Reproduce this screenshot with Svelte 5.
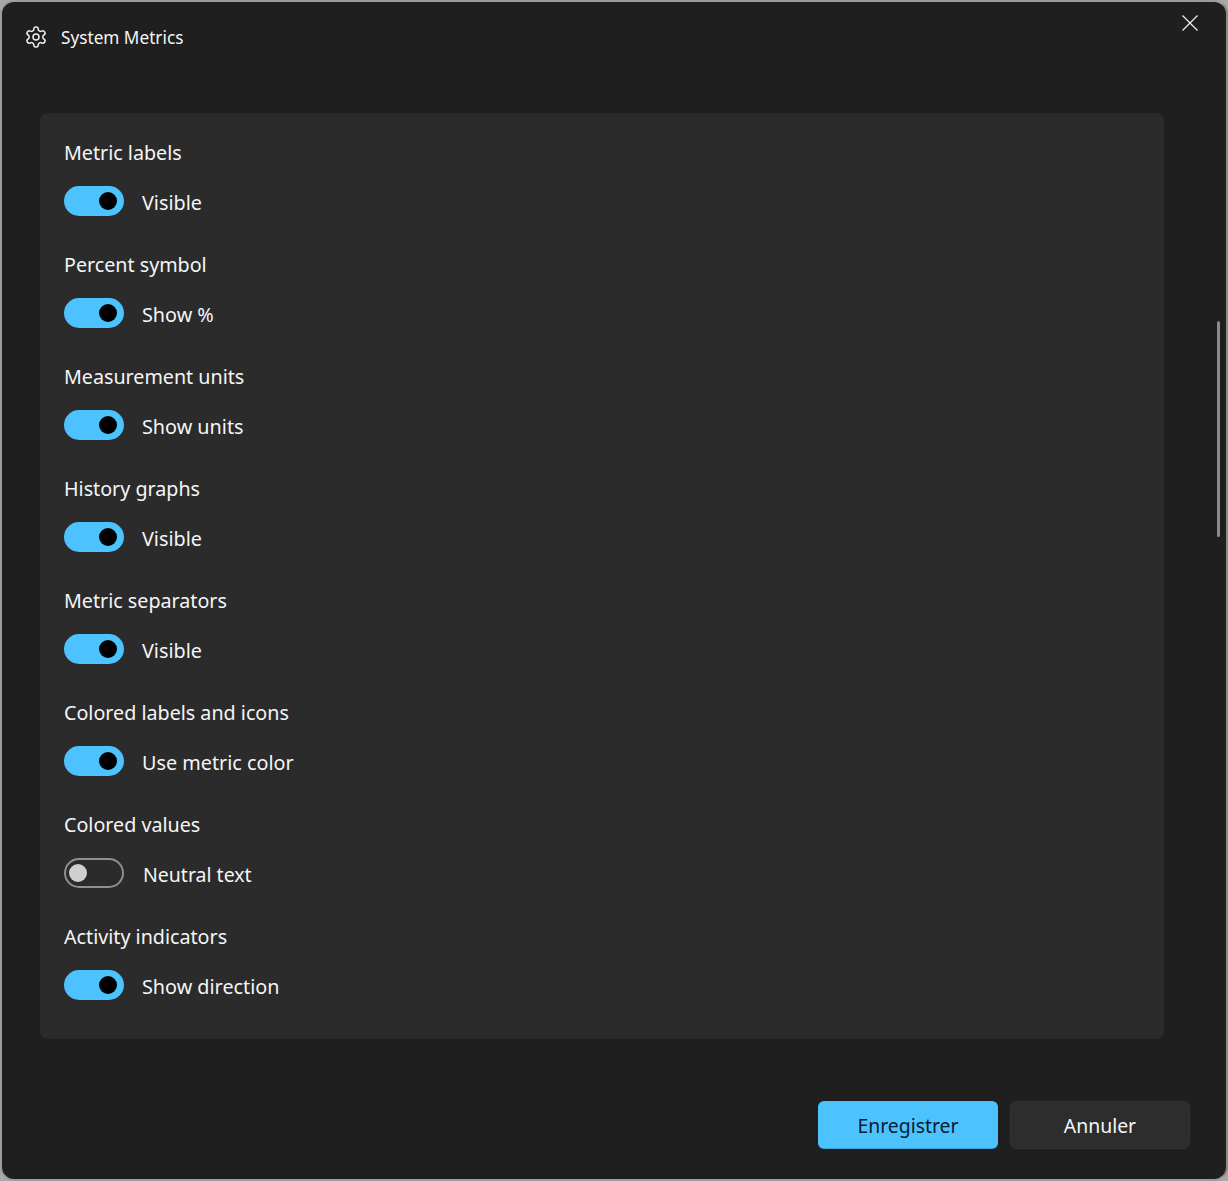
<script>
  const rows = [
    { title: 'Metric labels', text: 'Visible', on: true },
    { title: 'Percent symbol', text: 'Show %', on: true },
    { title: 'Measurement units', text: 'Show units', on: true },
    { title: 'History graphs', text: 'Visible', on: true },
    { title: 'Metric separators', text: 'Visible', on: true },
    { title: 'Colored labels and icons', text: 'Use metric color', on: true },
    { title: 'Colored values', text: 'Neutral text', on: false },
    { title: 'Activity indicators', text: 'Show direction', on: true }
  ];
</script>

<div class="window">
  <header class="titlebar">
    <div class="heading">
      <svg class="gear" viewBox="0 0 24 24" width="24" height="24" fill="none" stroke="#f0f0f0" stroke-width="1.5" stroke-linejoin="round">
        <path d="M12.22 2h-.44a2 2 0 0 0-2 2v.18a2 2 0 0 1-1 1.73l-.43.25a2 2 0 0 1-2 0l-.15-.08a2 2 0 0 0-2.73.73l-.22.38a2 2 0 0 0 .73 2.73l.15.1a2 2 0 0 1 1 1.72v.51a2 2 0 0 1-1 1.74l-.15.09a2 2 0 0 0-.73 2.73l.22.38a2 2 0 0 0 2.73.73l.15-.08a2 2 0 0 1 2 0l.43.25a2 2 0 0 1 1 1.73V20a2 2 0 0 0 2 2h.44a2 2 0 0 0 2-2v-.18a2 2 0 0 1 1-1.73l.43-.25a2 2 0 0 1 2 0l.15.08a2 2 0 0 0 2.73-.73l.22-.39a2 2 0 0 0-.73-2.73l-.15-.08a2 2 0 0 1-1-1.74v-.5a2 2 0 0 1 1-1.74l.15-.09a2 2 0 0 0 .73-2.73l-.22-.38a2 2 0 0 0-2.73-.73l-.15.08a2 2 0 0 1-2 0l-.43-.25a2 2 0 0 1-1-1.73V4a2 2 0 0 0-2-2z" />
        <circle cx="12" cy="12" r="3" />
      </svg>
      <span class="title">System Metrics</span>
    </div>
    <button class="close" aria-label="Close">
      <svg viewBox="0 0 16 16" width="16" height="16" stroke="#f2f2f2" stroke-width="1.2" fill="none">
        <path d="M.5.5l15 15M15.5.5l-15 15" />
      </svg>
    </button>
  </header>

  <div class="scrollarea">
    <section class="card">
      {#each rows as r}
        <div class="row">
          <div class="label">{r.title}</div>
          <div class="control">
            <span class="switch" class:on={r.on}><span class="knob"></span></span>
            <span class="state" class:off={!r.on}>{r.text}</span>
          </div>
        </div>
      {/each}
    </section>
    <div class="scrollbar"></div>
  </div>

  <footer class="footer">
    <button class="btn primary">Enregistrer</button>
    <button class="btn secondary">Annuler</button>
  </footer>
</div>

<style>
  :global(body) {
    margin: 0;
    background: #a8a8a8;
  }
  .window {
    box-sizing: border-box;
    width: 1228px;
    height: 1181px;
    background: #1f1f1f;
    border: 2px solid #9c9c9c;
    border-right-color: #8a8a8a;
    border-radius: 14px;
    font-family: "Noto Sans", "Open Sans", sans-serif;
    color: #f5f5f5;
    display: flex;
    flex-direction: column;
    overflow: hidden;
  }
  .titlebar {
    height: 111px;
    flex: none;
    display: flex;
    justify-content: space-between;
    align-items: flex-start;
    padding: 0 28px 0 22px;
  }
  .heading {
    display: flex;
    align-items: center;
    gap: 13px;
    height: 70px;
  }
  .gear {
    display: block;
  }
  .title {
    font-size: 17.2px;
  }
  .close {
    background: none;
    border: 0;
    padding: 0;
    margin-top: 13px;
    height: 16px;
    width: 16px;
    line-height: 0;
  }
  .scrollarea {
    position: relative;
    flex: none;
    height: 926px;
    padding-left: 38px;
  }
  .card {
    box-sizing: border-box;
    width: 1124px;
    height: 926px;
    background: #2b2b2b;
    border-radius: 8px;
    padding: 22px 24px 0;
  }
  .row {
    height: 112px;
  }
  .label {
    font-size: 19.7px;
    line-height: 36px;
    height: 51px;
  }
  .control {
    display: flex;
    align-items: center;
    height: 30px;
  }
  .switch {
    box-sizing: border-box;
    width: 60px;
    height: 30px;
    border-radius: 15px;
    border: 2px solid #8f8f8f;
    display: flex;
    align-items: center;
    justify-content: flex-start;
    padding: 0 3px;
    margin-right: 18px;
    flex: none;
  }
  .switch.on {
    background: #4cc2ff;
    border-color: #4cc2ff;
    justify-content: flex-end;
    padding: 0 5px;
  }
  .knob {
    width: 18px;
    height: 18px;
    border-radius: 50%;
    background: #cfcfcf;
  }
  .switch.on .knob {
    background: #000;
  }
  .state {
    font-size: 19.8px;
    line-height: 30px;
    position: relative;
    top: 2px;
  }
  .state.off {
    font-size: 19.5px;
    margin-left: 1px;
  }
  .scrollbar {
    position: absolute;
    right: 6px;
    top: 208px;
    width: 3px;
    height: 216px;
    border-radius: 2px;
    background: #8a8a8a;
  }
  .footer {
    flex: 1;
    display: flex;
    justify-content: flex-end;
    gap: 12px;
    padding: 62px 36px 0 0;
  }
  .btn {
    box-sizing: border-box;
    width: 180px;
    height: 48px;
    border-radius: 6px;
    font: inherit;
    font-size: 19.4px;
    padding: 0;
  }
  .primary {
    background: #4cc2ff;
    color: #06202f;
    border: 1px solid #4cc2ff;
    border-bottom-color: #3fa6dc;
  }
  .secondary {
    background: #2d2d2d;
    color: #f5f5f5;
    border: 1px solid #333;
  }
</style>
